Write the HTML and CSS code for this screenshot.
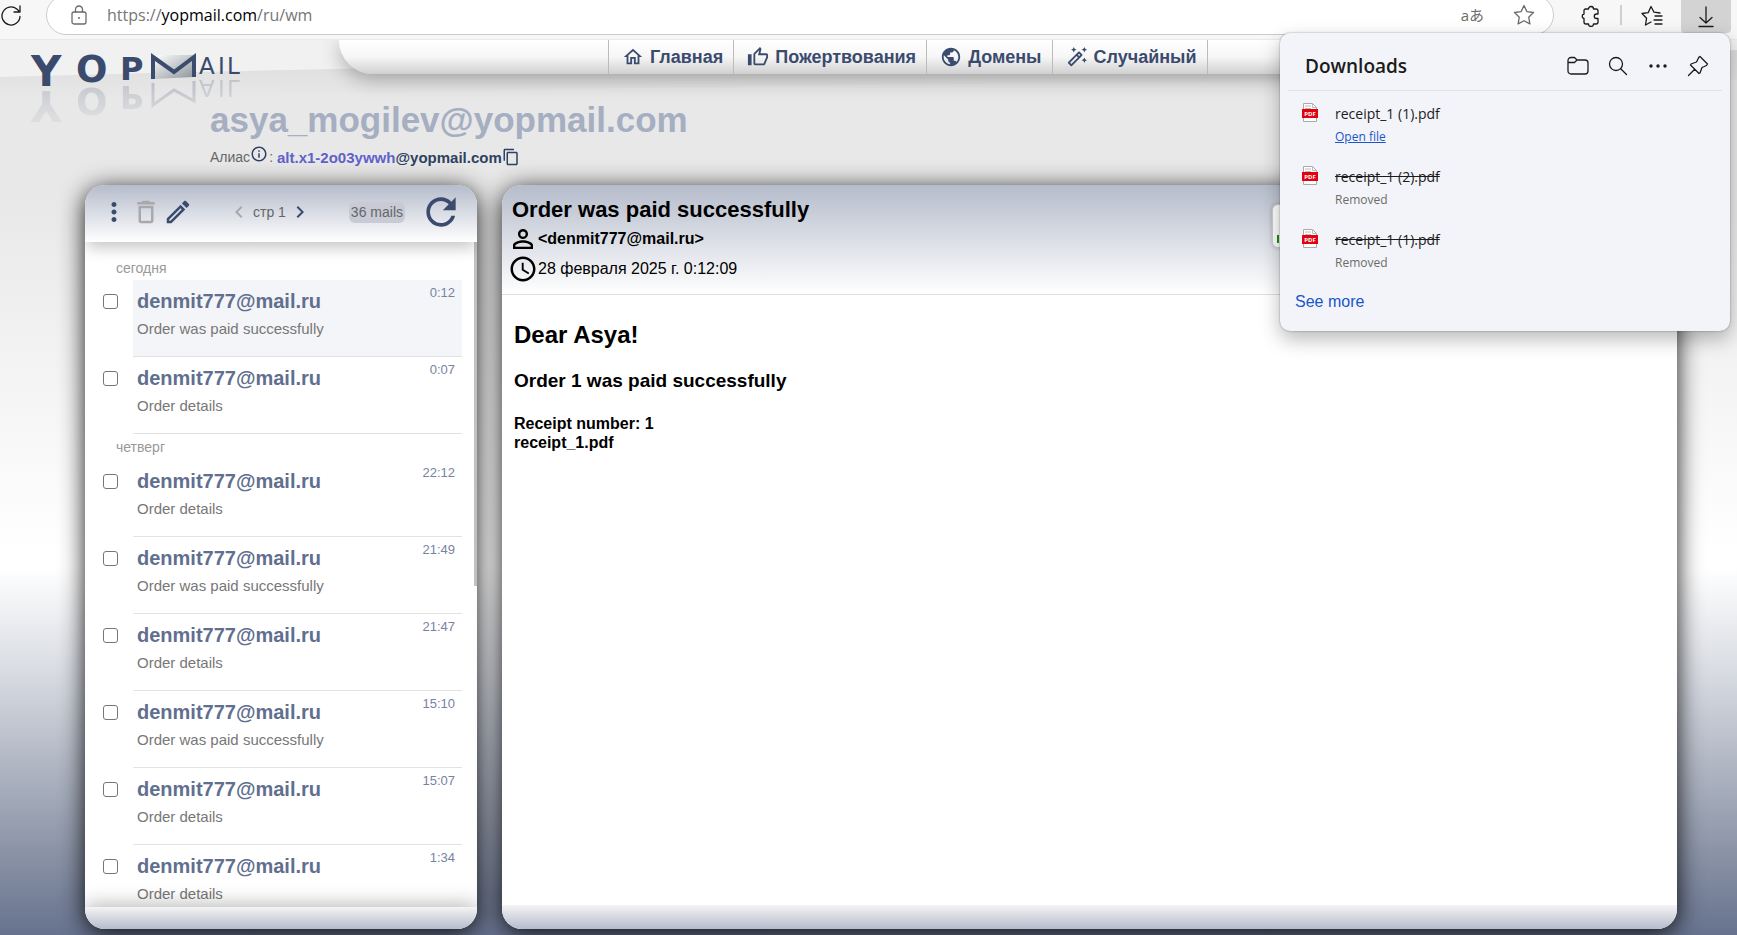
FILE: index.html
```html
<!DOCTYPE html>
<html lang="ru">
<head>
<meta charset="utf-8">
<title>YOPmail</title>
<link rel="stylesheet" href="styles.css">
</head>
<body>
<div class="toolbar">
  <button class="tool" aria-label="Reload"><svg width="20" height="22" viewBox="0 0 20 22" class="line"><path d="M19 11.500a9 9 0 1 1-3.200-7.400L19 7M19 1v6h-6"/></svg></button>
  <div class="address">
    <svg width="18" height="20" viewBox="0 0 18 20" class="line muted"><rect x="2" y="7" width="14" height="12" rx="2"/><path d="M5.500 7V4.500a3.500 3.500 0 0 1 7 0V7"/><circle cx="9" cy="13" r="1" fill="currentColor" stroke="none"/></svg>
    <div class="url">https://<b>yopmail.com</b>/ru/wm</div>
    <span class="translate">aあ</span>
    <svg width="22" height="22" viewBox="0 0 22 22" class="line muted"><path d="M11 1.500l2.900 6.100 6.600.9-4.800 4.700 1.200 6.700-5.900-3.200-5.900 3.200 1.200-6.700L1.500 8.500l6.600-.9z"/></svg>
  </div>
  <button class="tool" aria-label="Extensions"><svg width="22" height="22" viewBox="0 0 22 22" class="line"><path d="M5 4h3.500a2.500 2.500 0 0 1 5 0H16a2 2 0 0 1 2 2v3h-1.500a2.200 2.200 0 0 0 0 4.500H18V17a2 2 0 0 1-2 2h-2.500a2.500 2.500 0 0 1-5 0H6a2 2 0 0 1-2-2v-3.500a2.300 2.300 0 0 1 0-4.500V5.500A1.500 1.500 0 0 1 5.500 4z"/></svg></button>
  <span class="divider"></span>
  <button class="tool" aria-label="Favorites"><svg width="22" height="22" viewBox="0 0 22 22" class="line"><path d="M19 8l-6-.8L10 1.500l-2.700 6.100-6.300.9 4.600 4.700L4.500 20l5.500-3"/><path d="M14 11h7M13 15h8M14 19h7"/></svg></button>
  <button class="tool active" aria-label="Downloads"><svg width="18" height="22" viewBox="0 0 18 22" class="line"><path d="M9 1v16M3 11.500l6 5.500 6-5.500M2 20.500h14"/></svg></button>
</div>

<div class="page">
  <svg class="swoosh" viewBox="0 0 1000 60" preserveAspectRatio="none"><defs><linearGradient id="sw" x1="0" y1="0" x2="0" y2="1"><stop offset="0" stop-color="#dcdcdc"/><stop offset="1" stop-color="#e8e8e8"/></linearGradient></defs><path d="M0 0H1000V10Q400 18 0 37z" fill="#f1f1f1"/><path d="M0 37Q400 18 1000 10V40Q500 40 0 60z" fill="url(#sw)"/></svg>
  <header class="top">
    <svg class="logo" width="230" height="85" viewBox="0 0 230 85">
      <defs>
        <linearGradient id="env" x1="0" y1="0" x2="1" y2="1"><stop offset="0" stop-color="#fff"/><stop offset="1" stop-color="#8b9499"/></linearGradient>
        <linearGradient id="fade" x1="0" y1="40" x2="0" y2="78" gradientUnits="userSpaceOnUse"><stop offset="0" stop-color="#fff" stop-opacity=".25"/><stop offset="1" stop-color="#fff" stop-opacity=".08"/></linearGradient>
        <mask id="m" maskUnits="userSpaceOnUse" x="0" y="0" width="230" height="85"><rect width="230" height="85" fill="url(#fade)"/></mask>
      </defs>
      <g fill="#3a4b6e">
        <text id="ly" class="mark" x="15" y="46" font-size="42">Y</text>
        <text id="lo" class="mark" x="60" y="42" font-size="37">O</text>
        <text id="lp" class="mark" x="104" y="40" font-size="32">P</text>
        <g id="lm"><path d="M137 15H178V37L137 39z" fill="url(#env)"/><path d="M137 39V17l21 15 20-15v20" fill="none" stroke="#3a4b6e" stroke-width="4"/></g>
        <text id="la" class="mark thin" x="183 202 211" y="34" font-size="23">AIL</text>
      </g>
      <g mask="url(#m)" fill="#5a6780">
        <use href="#ly" transform="translate(0 97) scale(1 -1)"/>
        <use href="#lo" transform="translate(0 90) scale(1 -1)"/>
        <use href="#lp" transform="translate(0 86) scale(1 -1)"/>
        <path d="M137 43v22l21-15 20 11V41" fill="none" stroke="#3a4b6e" stroke-width="3"/>
        <use href="#la" transform="translate(0 74) scale(1 -1)"/>
      </g>
    </svg>
    <nav class="menu">
      <a href="#"><svg class="mi" viewBox="0 0 24 24"><path d="M12 5.690l5 4.500V18h-2v-6H9v6H7v-7.810l5-4.500M12 3L2 12h3v8h6v-6h2v6h6v-8h3L12 3z"/></svg>Главная</a>
      <a href="#"><svg class="mi" viewBox="0 0 24 24"><path d="M9 21h9c.83 0 1.540-.5 1.840-1.220l3.020-7.050c.09-.23.14-.47.14-.73v-2c0-1.100-.9-2-2-2h-6.310l.95-4.570.03-.32c0-.41-.17-.79-.44-1.060L14.170 1 7.580 7.590C7.220 7.950 7 8.450 7 9v10c0 1.100.9 2 2 2zM9 9l4.340-4.340L12 10h9v2l-3 7H9V9zM1 9h4v12H1z"/></svg>Пожертвования</a>
      <a href="#"><svg class="mi" viewBox="0 0 24 24"><path d="M12 2C6.480 2 2 6.480 2 12s4.480 10 10 10 10-4.480 10-10S17.520 2 12 2zm-1 17.930c-3.950-.49-7-3.850-7-7.930 0-.62.08-1.210.21-1.790L9 15v1c0 1.100.9 2 2 2v1.930zm6.900-2.540c-.26-.81-1-1.390-1.900-1.390h-1v-3c0-.55-.45-1-1-1H8v-2h2c.55 0 1-.45 1-1V7h2c1.100 0 2-.9 2-2v-.41c2.930 1.190 5 4.060 5 7.410 0 2.080-.8 3.970-2.100 5.390z"/></svg>Домены</a>
      <a href="#"><svg class="mi" viewBox="0 0 24 24"><path d="M20 7l.94-2.060L23 4l-2.060-.94L20 1l-.94 2.060L17 4l2.060.94zM8.500 7l.94-2.060L11.500 4l-2.060-.94L8.500 1l-.94 2.060L5.500 4l2.060.94zM20 12.500l-.94 2.060-2.060.94 2.060.94.94 2.060.94-2.060L23 15.500l-2.060-.94zM17.710 9.120l-2.830-2.830c-.19-.19-.45-.29-.7-.29-.26 0-.51.1-.71.29L2.290 17.460c-.39.39-.39 1.020 0 1.410l2.830 2.830c.2.2.45.3.71.3s.51-.1.71-.29l11.170-11.170c.39-.4.39-1.030 0-1.420zm-3.540-.7l1.410 1.410L14.410 11 13 9.590l1.170-1.170zM5.830 19.590l-1.410-1.410L11.590 11 13 12.410l-7.170 7.180z"/></svg>Случайный</a>
    </nav>
  </header>

  <div class="account">
    <h1>asya_mogilev@yopmail.com</h1>
    <p class="alias">Алиас<svg class="info" viewBox="0 0 24 24"><path d="M11 7h2v2h-2zm0 4h2v6h-2zm1-9C6.480 2 2 6.480 2 12s4.480 10 10 10 10-4.480 10-10S17.520 2 12 2zm0 18c-4.410 0-8-3.590-8-8s3.590-8 8-8 8 3.590 8 8-3.590 8-8 8z"/></svg><span class="colon">:</span><b><i>alt.x1-2o03ywwh</i>@yopmail.com</b><svg class="copy" viewBox="0 0 24 24"><path d="M16 1H4c-1.100 0-2 .9-2 2v14h2V3h12V1zm3 4H8c-1.100 0-2 .9-2 2v14c0 1.100.9 2 2 2h11c1.100 0 2-.9 2-2V7c0-1.100-.9-2-2-2zm0 16H8V7h11v14z"/></svg></p>
  </div>

  <main class="panels">
    <section class="panel inbox">
      <div class="inbox-head">
        <button class="ib" aria-label="Меню"><svg viewBox="0 0 24 24"><path d="M12 8c1.100 0 2-.9 2-2s-.9-2-2-2-2 .9-2 2 .9 2 2 2zm0 2c-1.100 0-2 .9-2 2s.9 2 2 2 2-.9 2-2-.9-2-2-2zm0 6c-1.100 0-2 .9-2 2s.9 2 2 2 2-.9 2-2-.9-2-2-2z"/></svg></button>
        <button class="ib off" aria-label="Удалить"><svg viewBox="0 0 24 24"><path d="M16 9v10H8V9h8m-1.500-6h-5l-1 1H5v2h14V4h-3.500l-1-1zM18 7H6v12c0 1.100.9 2 2 2h8c1.100 0 2-.9 2-2V7z"/></svg></button>
        <button class="ib" aria-label="Написать"><svg viewBox="0 0 24 24"><path d="M14.060 9.020l.92.920L5.920 19H5v-.92l9.060-9.060M17.660 3c-.25 0-.51.1-.7.29l-1.830 1.830 3.750 3.750 1.830-1.830c.39-.39.39-1.020 0-1.410l-2.340-2.340c-.2-.2-.45-.29-.71-.29zm-3.600 3.190L3 17.250V21h3.750L17.810 9.940l-3.750-3.750z"/></svg></button>
        <div class="pager">
          <button class="pg off" aria-label="Назад"><svg viewBox="0 0 24 24"><path d="M15.410 7.410L14 6l-6 6 6 6 1.410-1.410L10.830 12z"/></svg></button>
          <span>стр 1</span>
          <button class="pg" aria-label="Вперёд"><svg viewBox="0 0 24 24"><path d="M10 6L8.590 7.410 13.170 12l-4.580 4.590L10 18l6-6z"/></svg></button>
        </div>
        <span class="count">36 mails</span>
        <button class="reload" aria-label="Обновить"><svg viewBox="0 0 24 24"><path d="M17.650 6.350C16.200 4.900 14.210 4 12 4c-4.420 0-7.990 3.580-7.990 8s3.570 8 7.990 8c3.730 0 6.840-2.550 7.730-6h-2.080c-.82 2.330-3.040 4-5.650 4-3.310 0-6-2.690-6-6s2.690-6 6-6c1.660 0 3.140.69 4.220 1.780L13 11h7V4l-2.350 2.350z"/></svg></button>
      </div>
      <div class="list">
        <div class="day">сегодня</div>
        <div class="row"><input type="checkbox" aria-label="Выбрать"><div class="mail current"><div class="who"><b>denmit777@mail.ru</b><time>0:12</time></div><p>Order was paid successfully</p></div></div>
        <div class="row"><input type="checkbox" aria-label="Выбрать"><div class="mail"><div class="who"><b>denmit777@mail.ru</b><time>0:07</time></div><p>Order details</p></div></div>
        <div class="day next">четверг</div>
        <div class="row"><input type="checkbox" aria-label="Выбрать"><div class="mail"><div class="who"><b>denmit777@mail.ru</b><time>22:12</time></div><p>Order details</p></div></div>
        <div class="row"><input type="checkbox" aria-label="Выбрать"><div class="mail"><div class="who"><b>denmit777@mail.ru</b><time>21:49</time></div><p>Order was paid successfully</p></div></div>
        <div class="row"><input type="checkbox" aria-label="Выбрать"><div class="mail"><div class="who"><b>denmit777@mail.ru</b><time>21:47</time></div><p>Order details</p></div></div>
        <div class="row"><input type="checkbox" aria-label="Выбрать"><div class="mail"><div class="who"><b>denmit777@mail.ru</b><time>15:10</time></div><p>Order was paid successfully</p></div></div>
        <div class="row"><input type="checkbox" aria-label="Выбрать"><div class="mail"><div class="who"><b>denmit777@mail.ru</b><time>15:07</time></div><p>Order details</p></div></div>
        <div class="row"><input type="checkbox" aria-label="Выбрать"><div class="mail"><div class="who"><b>denmit777@mail.ru</b><time>1:34</time></div><p>Order details</p></div></div>
        <span class="thumb"></span>
      </div>
      <div class="foot shade"></div>
    </section>

    <section class="panel message">
      <div class="message-head">
        <div class="meta">
          <h2>Order was paid successfully</h2>
          <div class="line-item"><svg viewBox="0 0 24 24"><path d="M12 5.900a2.100 2.100 0 1 1 0 4.200 2.100 2.100 0 0 1 0-4.200m0 9c2.970 0 6.100 1.460 6.100 2.100v1.100H5.900V17c0-.64 3.130-2.100 6.100-2.100M12 4C9.790 4 8 5.790 8 8s1.790 4 4 4 4-1.790 4-4-1.790-4-4-4zm0 9c-2.670 0-8 1.340-8 4v3h16v-3c0-2.660-5.330-4-8-4z"/></svg><b>&lt;denmit777@mail.ru&gt;</b></div>
          <div class="line-item"><svg viewBox="0 0 24 24"><path d="M11.990 2C6.470 2 2 6.480 2 12s4.470 10 9.990 10C17.520 22 22 17.520 22 12S17.520 2 11.990 2zM12 20c-4.420 0-8-3.580-8-8s3.580-8 8-8 8 3.580 8 8-3.580 8-8 8zm.5-13H11v6l5.250 3.150.75-1.230-4.500-2.670z"/></svg><span>28 февраля 2025 г. 0:12:09</span></div>
        </div>
        <div class="actions"><button aria-label="Текст"><svg width="12" height="8" viewBox="0 0 12 8"><path d="M0 0h2v8H0z" fill="#1a8f1a"/></svg></button></div>
      </div>
      <article>
        <h3>Dear Asya!</h3>
        <h4>Order 1 was paid successfully</h4>
        <p>Receipt number: 1<br>receipt_1.pdf</p>
      </article>
      <div class="foot tall"></div>
    </section>
  </main>
</div>

<aside class="downloads">
  <div class="dl-head">
    <h2>Downloads</h2>
    <button aria-label="Open folder"><svg width="22" height="22" viewBox="0 0 22 22" class="line"><path d="M1 5.500A3 3 0 0 1 4 2.500h3.500L10 5h8a3 3 0 0 1 3 3v8a3 3 0 0 1-3 3H4a3 3 0 0 1-3-3zM1 7.500h6.500L10 5"/></svg></button>
    <button aria-label="Search"><svg width="22" height="22" viewBox="0 0 22 22" class="line"><circle cx="9" cy="9" r="6.500"/><path d="M13.700 13.700L19.500 19.500"/></svg></button>
    <button aria-label="More"><svg width="22" height="22" viewBox="0 0 22 22"><circle cx="4" cy="11" r="1.700"/><circle cx="11" cy="11" r="1.700"/><circle cx="18" cy="11" r="1.700"/></svg></button>
    <button aria-label="Pin"><svg width="22" height="22" viewBox="0 0 22 22" class="line"><path d="M13 1.500L20.500 9l-1 1.500-4.500 2-2 5.500-1 .5L3.500 10l.5-1 5.500-2 2.500-5zM7.700 14.300L1.500 20.500"/></svg></button>
  </div>
  <ul>
    <li><svg width="16" height="19" viewBox="0 0 16 19"><path d="M1.500.5h9l4 4v14h-13z" fill="#fff" stroke="#aaa"/><path d="M10.500.5v4h4M3 3h6M3 5.500h6" fill="none" stroke="#bbb"/><path d="M0 6h16v9H0z" fill="#e3000f"/><text x="8" y="13" class="pdf">PDF</text></svg><div><span>receipt_1 (1).pdf</span><a href="#">Open file</a></div></li>
    <li><svg width="16" height="19" viewBox="0 0 16 19"><path d="M1.500.5h9l4 4v14h-13z" fill="#fff" stroke="#aaa"/><path d="M10.500.5v4h4M3 3h6M3 5.500h6" fill="none" stroke="#bbb"/><path d="M0 6h16v9H0z" fill="#e3000f"/><text x="8" y="13" class="pdf">PDF</text></svg><div><s>receipt_1 (2).pdf</s><small>Removed</small></div></li>
    <li><svg width="16" height="19" viewBox="0 0 16 19"><path d="M1.500.5h9l4 4v14h-13z" fill="#fff" stroke="#aaa"/><path d="M10.500.5v4h4M3 3h6M3 5.500h6" fill="none" stroke="#bbb"/><path d="M0 6h16v9H0z" fill="#e3000f"/><text x="8" y="13" class="pdf">PDF</text></svg><div><s>receipt_1 (1).pdf</s><small>Removed</small></div></li>
  </ul>
  <a class="more" href="#">See more</a>
</aside>
</body>
</html>
```
FILE: styles.css
```css
* { box-sizing: border-box; margin: 0; padding: 0; }
body { height: 100vh; display: flex; flex-direction: column; overflow: hidden; font-family: "Liberation Sans", Arial, sans-serif; color: #000; }
button { border: 0; background: none; color: inherit; font: inherit; display: flex; align-items: center; justify-content: center; }
svg { display: block; flex: none; fill: currentColor; }
.line { fill: none; stroke: currentColor; stroke-width: 1.3; stroke-linejoin: round; stroke-linecap: round; }
.muted { color: #6b6b6b; }

.toolbar { flex: none; height: 40px; display: flex; align-items: flex-start; background: #f7f7f7; border-bottom: 1px solid #eaeaea; overflow: hidden; color: #1b1b1b; }
.tool { height: 32px; margin-left: 1px; }
.address { flex: 1; height: 40px; margin: -5px 25px 0 25px; padding: 0 18px 0 23px; display: flex; align-items: center; background: #fff; border: 1px solid #ccc; border-radius: 20px; }
.url { flex: 1; margin-left: 19px; font: 16px/24px "Open Sans", "Noto Sans", sans-serif; color: #767676; }
.url b { font-weight: 400; color: #000; }
.translate { margin-right: 29px; font: 15px/24px "Open Sans", "Noto Sans CJK JP", sans-serif; color: #6b6b6b; }
.divider { width: 2px; height: 20px; margin: 5px 18px 0; background: #cfcfcf; }
.active { width: 50px; height: 33px; margin: 0 6px 0 18px; background: #d3d3d3; border-radius: 0 0 4px 4px; }

.page { flex: 1; min-height: 0; position: relative; display: flex; flex-direction: column; background: linear-gradient(#e8e8e8 0%, #e8e8e8 17%, #fff 57%, #fff 59%, #d7dae1 71%, #959dae 88%, #67728e 100%); }
.swoosh { position: absolute; top: 0; left: 0; width: 100%; height: 60px; }
.top { position: relative; display: flex; align-items: flex-start; height: 60px; }
.logo { margin-left: 16px; overflow: visible; }
.mark { font-family: "DejaVu Sans", sans-serif; font-weight: 700; }
.thin { font-weight: 400; }
.menu { flex: 1; height: 34px; margin: 0 60px 0 93px; padding-left: 269px; display: flex; border-radius: 0 0 34px 34px; background: linear-gradient(#fff, #f6f6f6 50%, #d0d0d0); box-shadow: 0 5px 20px rgba(0, 0, 0, .3); clip-path: inset(0 -30px -40px -30px); }
.menu a { display: flex; align-items: center; gap: 6px; padding: 0 10px 0 13px; border-left: 1px solid #bbb; font-size: 18px; font-weight: 700; color: #3a4b6e; text-decoration: none; }
.menu a:last-child { border-right: 1px solid #bbb; }
.mi { width: 22px; height: 22px; }

.account { position: relative; padding: 0 0 16px 210px; }
.account h1 { font-size: 35px; line-height: 40px; color: #a6aec2; }
.alias { display: flex; align-items: center; height: 24px; margin-top: 5px; font-size: 14px; color: #666; }
.alias b { font-size: 15px; color: #2f4061; }
.alias i { font-style: normal; color: #6161c9; }
.info { width: 18px; height: 18px; margin: 0 1px 6px 0; color: #2f4061; }
.colon { margin-right: 4px; }
.copy { width: 18px; height: 18px; color: #2f4061; }

.panels { position: relative; flex: 1; min-height: 0; display: flex; gap: 25px; padding: 0 60px 6px 85px; }
.panel { display: flex; flex-direction: column; background: #fff; border-radius: 20px; box-shadow: 0 4px 25px rgba(0, 0, 0, .9); overflow: hidden; }
.inbox { width: 392px; flex: none; }
.message { flex: 1; }
.inbox-head { position: relative; z-index: 1; height: 57px; flex: none; display: flex; align-items: center; gap: 2px; padding: 0 14px 3px; color: #3a4b6e; background: linear-gradient(#b5bccb, #fff); box-shadow: 0 8px 14px -2px rgba(0, 0, 0, .22); }
.ib svg { width: 30px; height: 30px; }
.off { color: #a9a9ad; }
.pager { display: flex; align-items: center; gap: 2px; margin-left: 32px; font-size: 14px; color: #666; }
.pg svg { width: 24px; height: 24px; }
.pager .pg { color: #3a4b6e; }
.pager .off { color: #a9a9ad; }
.count { margin-left: auto; padding: 0 2px; font-size: 14px; line-height: 21px; color: #666; background: #c8cbd6; border-radius: 6px; }
.reload { margin-left: 12px; }
.reload svg { width: 44px; height: 44px; }
.list { position: relative; flex: 1; min-height: 0; overflow: hidden; padding: 14px 15px 0 18px; }
.day { height: 24px; padding-left: 13px; font-size: 14px; line-height: 24px; color: #999; }
.next { height: 26px; line-height: 26px; }
.row { display: flex; gap: 15px; height: 77px; }
.row input { appearance: none; width: 15px; height: 15px; margin-top: 14px; border: 1px solid #767676; border-radius: 3px; background: #fff; }
.mail { flex: 1; padding: 5px 7px 0 4px; border-bottom: 1px solid #e3e3e3; }
.current { background: #f4f5f8; }
.who { display: flex; justify-content: space-between; align-items: flex-start; color: #616f8f; }
.who b { padding-top: 4px; font-size: 20px; line-height: 24px; }
.who time { font-size: 13px; line-height: 16px; color: #7783a3; }
.mail p { margin-top: 6px; font-size: 15px; line-height: 20px; color: #777; }
.thumb { position: absolute; top: 0; right: 0; width: 3px; height: 344px; background: #c1c1c1; }
.foot { position: relative; z-index: 1; flex: none; height: 22px; background: linear-gradient(#f4f4f5, #b5bccb); }
.shade { box-shadow: 0 -2px 20px rgba(0, 0, 0, .3); }
.tall { height: 24px; }

.message-head { flex: none; display: flex; justify-content: space-between; height: 110px; border-bottom: 1px solid #ddd; background: linear-gradient(#b5bccb, #fff); }
.meta { padding: 11px 0 0 6px; }
.meta h2 { padding-left: 4px; font-size: 22px; line-height: 28px; }
.line-item { display: flex; align-items: center; height: 30px; font-size: 16px; line-height: 20px; }
.line-item svg { width: 30px; height: 30px; }
.actions { width: 405px; padding-top: 19px; }
.actions button { width: 70px; height: 44px; padding: 0 0 4px 4px; align-items: flex-end; justify-content: flex-start; background: #fff; border: 1px solid #ccc; border-radius: 6px; box-shadow: 0 0 4px rgba(0, 0, 0, .2); }
article { flex: 1; padding: 26px 12px; }
article h3 { font-size: 24px; line-height: 28px; }
article h4 { margin-top: 21px; font-size: 19px; line-height: 22px; }
article p { margin-top: 22px; font-size: 16px; line-height: 19px; font-weight: 700; }

.downloads { position: absolute; top: 33px; right: 7px; width: 450px; height: 298px; padding: 0 8px; background: #f3f4f9; border-radius: 10px; box-shadow: 0 0 2px rgba(0, 0, 0, .4), 0 8px 20px rgba(0, 0, 0, .28); font-family: "Open Sans", "Noto Sans", sans-serif; color: #1b1b1b; }
.dl-head { display: flex; align-items: center; gap: 18px; height: 58px; padding: 8px 13px 0 17px; border-bottom: 1px solid #dfe1e5; }
.dl-head h2 { flex: 1; font-size: 19px; font-weight: 600; }
.downloads ul { list-style: none; padding-left: 14px; }
.downloads li { display: flex; align-items: flex-start; gap: 17px; height: 63px; padding-top: 12px; }
.downloads li div { display: flex; flex-direction: column; align-items: flex-start; font-size: 14px; line-height: 22px; }
.downloads li a, .downloads small { font-size: 12px; line-height: 24px; }
.downloads li a { color: #1a56c8; }
.downloads small { color: #6b6b6b; }
.pdf { font: 700 6px "Open Sans", sans-serif; fill: #fff; text-anchor: middle; }
.more { display: block; padding-left: 7px; margin-top: 12px; font: 16px/20px "Liberation Sans", Arial, sans-serif; color: #1a56c8; text-decoration: none; }
```
